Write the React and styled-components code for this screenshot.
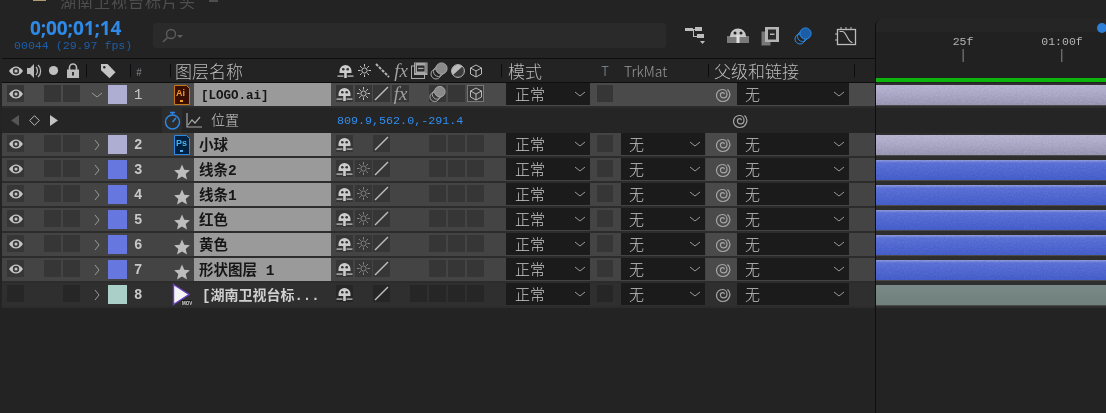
import React from 'react';
import styled, { createGlobalStyle } from 'styled-components';

const GlobalStyle = createGlobalStyle`
  html, body {
    margin: 0;
    height: 100%;
    background: #232323;
    overflow: hidden;
  }
`;

const COLS = '5px 18px 19px 19px 19px 26px 22px 40px 24px 137px 5px 19px 18px 19px 18px 19px 19px 19px 18px 21px 84px 7px 16px 8px 84px 1px 31px 112px 25px';

const CJK = `"Noto Sans CJK SC", "Noto Sans", sans-serif`;
const MONO = `"Liberation Mono", "Noto Sans CJK SC", monospace`;

const Window = styled.div`
  width: 1106px;
  height: 413px;
  display: flex;
  background: #232323;
  overflow: hidden;
`;
const LeftPanel = styled.div`
  width: 875px;
  flex: none;
  display: flex;
  flex-direction: column;
`;
const RightPanel = styled.div`
  flex: 1;
  min-width: 0;
  padding-top: 19px;
  display: flex;
  flex-direction: column;
`;
const Timeline = styled.div`
  flex: 1;
  position: relative;
  display: flex;
  flex-direction: column;
  border-left: 1px solid #0e0e0e;
  border-top-left-radius: 7px;
  overflow: hidden;
`;
const TitleStrip = styled.div`
  height: 9px;
  display: flex;
  align-items: flex-start;
  padding-left: 33px;
  overflow: hidden;
`;
const TitleTag = styled.span`
  width: 13px;
  height: 1px;
  background: #b09a70;
  flex: none;
`;
const TitleText = styled.span`
  font: 16px/16px ${CJK};
  color: #4e4e4e;
  letter-spacing: 1px;
  margin: -7px 0 0 14px;
  white-space: nowrap;
`;
const TitleMenu = styled.span`
  width: 9px;
  height: 2px;
  margin-left: 13px;
  background: #4e4e4e;
  flex: none;
`;
const TopBar = styled.div`
  height: 49px;
  display: flex;
  align-items: flex-start;
  border-bottom: 1px solid #0e0e0e;
  margin-left: 2px;
`;
const TimeBlock = styled.div`
  width: 151px;
  flex: none;
  display: flex;
  flex-direction: column;
  align-items: flex-start;
  padding: 9px 0 0 12px;
  box-sizing: border-box;
`;
const TimeCode = styled.div`
  font: 700 19px/21px "Open Sans", sans-serif;
  color: #2e8ae6;
  margin-left: 16px;
  letter-spacing: -0.1px;
`;
const FrameCount = styled.div`
  font: 11.6px/12px ${MONO};
  color: #1d5ea8;
  margin-top: 1px;
  white-space: nowrap;
`;
const SearchBox = styled.div`
  width: 513px;
  height: 25px;
  margin-top: 14px;
  background: #2a2a2a;
  border-radius: 3px;
  display: flex;
  align-items: center;
  padding-left: 9px;
  box-sizing: border-box;
`;
const Tools = styled.div`
  display: flex;
  align-items: center;
  margin-top: 16px;
  margin-left: 19px;
  height: 22px;
`;
const ToolSlot = styled.span`
  display: flex;
  margin-left: ${p => p.$gap || 0}px;
`;
const RowGrid = styled.div`
  display: grid;
  grid-template-columns: ${COLS};
  grid-template-rows: 23px;
  align-items: center;
  margin-left: 2px;
`;
const HeaderRow = styled(RowGrid)`
  height: 23px;
  border-bottom: 1px solid #0e0e0e;
`;
const LayerRow = styled(RowGrid)`
  height: 23px;
  border-bottom: 2px solid #2c2c2c;
  background: ${p => (p.$active ? '#4a4a4a' : p.$dim ? '#2f2f2f' : '#444444')};
`;
const SubRow = styled.div`
  height: 25px;
  margin-left: 2px;
  background: #252525;
  display: grid;
  grid-template-columns: 8px 10px 8px 13px 8px 10px 102px 22px 22px 132px 395px 20px;
  grid-template-rows: 25px;
  align-items: center;
`;
const Cell = styled.div`
  grid-column: ${p => p.$col};
  grid-row: 1;
  height: 100%;
  min-width: 0;
  display: flex;
  align-items: center;
  justify-content: ${p => p.$justify || 'center'};
  padding-left: ${p => p.$pl || 0}px;
  padding-right: ${p => p.$pr || 0}px;
  box-sizing: border-box;
`;
const BoxCell = styled(Cell)`
  justify-content: flex-start;
`;
const HeadDivider = styled.span`
  width: 1px;
  height: 13px;
  background: #0c0c0c;
  flex: none;
  margin-left: ${p => p.$ml || 0}px;
  margin-right: ${p => p.$mr || 0}px;
`;
const HeadText = styled.span`
  font: 300 ${p => p.$size || 17}px/20px ${CJK};
  color: ${p => p.$color || '#bdbdbd'};
  margin-left: ${p => p.$ml || 0}px;
  white-space: nowrap;
`;
const TagSlot = styled.span`
  display: flex;
  margin-left: 13px;
`;
const Box = styled.span`
  width: ${p => p.$w || 17}px;
  height: 17px;
  margin-bottom: 2px;
  flex: none;
  background: ${p => (p.$dim ? '#262626' : '#363636')};
  box-shadow: ${p => (p.$on ? 'inset 0 0 0 1px #777' : 'none')};
  display: flex;
  align-items: center;
  justify-content: center;
`;
const FxText = styled.span`
  font: italic 19px/17px "Liberation Serif", serif;
  color: #a0a0a0;
`;
const Chevron = styled.svg`
  width: 10px;
  height: 10px;
  fill: none;
  stroke: #9a9a9a;
  stroke-width: 1;
`;
const Label = styled.span`
  width: 19px;
  height: 19px;
  background: ${p => p.$color};
  flex: none;
`;
const Num = styled.span`
  font: ${p => (p.$light ? 400 : 700)} 14px/16px "Liberation Mono", monospace;
  color: #c8c8c8;
  padding-left: 4px;
`;
const StarWrap = styled.span`
  display: flex;
  margin-top: 4px;
`;
const NameBox = styled.div`
  width: 100%;
  height: 100%;
  padding-left: ${p => p.$pad}px;
  background: ${p => (p.$plain ? 'transparent' : '#9a9a9a')};
  color: ${p => (p.$plain ? '#d0d0d0' : '#161616')};
  font: 700 ${p => p.$size}px/27px ${MONO};
  white-space: pre;
  overflow: hidden;
  box-sizing: border-box;
`;
const Select = styled.div`
  width: 100%;
  height: 22px;
  margin-bottom: 1px;
  background: #1b1b1b;
  color: #c9c9c9;
  display: flex;
  align-items: center;
  justify-content: space-between;
  padding: 0 5px 0 ${p => p.$pad || 8}px;
  box-sizing: border-box;
  font: 300 15px/22px ${CJK};
`;
const PickCell = styled(Cell)`
  background: ${p => (p.$plain ? 'transparent' : '#4a4a4a')};
  padding-left: 3px;
`;
const StopBox = styled.span`
  width: 20px;
  height: 25px;
  background: #2c2c2c;
  display: flex;
  align-items: center;
  justify-content: center;
`;
const PropName = styled.span`
  font: 300 14px/20px ${CJK};
  color: #c4c4c4;
  padding-left: 6px;
  margin-bottom: 3px;
`;
const PropValue = styled.span`
  font: 11.7px/14px ${MONO};
  color: #308ef0;
  white-space: nowrap;
`;
const Ruler = styled.div`
  height: 40px;
  flex: none;
  background: #212121;
  position: relative;
  box-shadow: inset 0 13px 0 #252525;
`;
const Tick = styled.div`
  position: absolute;
  left: ${p => p.$x}px;
  top: 16px;
  font: 11.5px/14px ${MONO};
  color: #b4b4b4;
  transform: translateX(-50%);
  display: flex;
  flex-direction: column;
  align-items: center;
  white-space: nowrap;
`;
const TickLine = styled.span`
  width: 1px;
  height: 13px;
  background: #8a8a8a;
`;
const PlayDot = styled.span`
  position: absolute;
  right: -1px;
  top: 4px;
  width: 10px;
  height: 10px;
  border-radius: 50%;
  background: #2e7fd6;
`;
const WorkArea = styled.div`
  height: 24px;
  flex: none;
  background: #212121;
  box-sizing: border-box;
  padding-top: 19px;
`;
const GreenBar = styled.div`
  height: 4px;
  background: #0bb50b;
`;
const TrackRow = styled.div`
  height: 25px;
  flex: none;
  box-sizing: border-box;
  background: ${p => (p.$empty ? '#252525' : '#2e2e2e')};
  padding: ${p => (p.$empty ? 0 : '2px 0 3px')};
`;
const Bar = styled.div`
  height: 100%;
  position: relative;
  overflow: hidden;
  background: ${p => p.$bg};
  box-shadow: 0 1px 0 #4a4a4a;
`;
const Grain = styled.svg`
  position: absolute;
  inset: 0;
  width: 100%;
  height: 100%;
  opacity: 0.35;
  mix-blend-mode: overlay;
`;

const Eye = () => (
  <svg width="16" height="16" viewBox="0 0 16 16">
    <path d="M1 8c2-3 4.500-4.500 7-4.500S13 5 15 8c-2 3-4.500 4.500-7 4.500S3 11 1 8z" fill="#c4c4c4" />
    <circle cx="8" cy="8" r="3.200" fill="#3a3a3a" />
    <circle cx="8" cy="8" r="1.500" fill="#c4c4c4" />
  </svg>
);
const Speaker = () => (
  <svg width="17" height="16" viewBox="0 0 17 16" fill="none">
    <path d="M1 5h3l4-4v14l-4-4H1z" fill="#b8b8b8" />
    <path d="M10 4c2 2 2 6 0 8M12 2c3.500 3 3.500 9 0 12" stroke="#b8b8b8" strokeWidth="1.300" />
  </svg>
);
const Dot = () => (
  <svg width="11" height="11" viewBox="0 0 11 11"><circle cx="5.500" cy="5.500" r="4.600" fill="#c0c0c0" /></svg>
);
const Lock = () => (
  <svg width="14" height="15" viewBox="0 0 14 15" fill="none">
    <path d="M3.500 7V4.500a3.500 3.500 0 0 1 7 0V7" stroke="#bcbcbc" strokeWidth="1.600" />
    <path d="M1 6.500h12V15H1z" fill="#bcbcbc" />
    <rect x="6" y="9" width="2" height="3.500" fill="#333" />
  </svg>
);
const Tag = () => (
  <svg width="16" height="16" viewBox="0 0 16 16">
    <path d="M1 1h6.500l8 8.200-6 6L1 7.200z" fill="#c4c4c4" />
    <circle cx="4.300" cy="4.300" r="1.200" fill="#2a2a2a" />
  </svg>
);
const Shy = () => (
  <svg width="17" height="16" viewBox="0 0 17 16">
    <path d="M2.500 8a6 6 0 0 1 12 0v2h-12z" fill="#cccccc" />
    <circle cx="6.300" cy="6.300" r="1.300" fill="#333" />
    <circle cx="10.700" cy="6.300" r="1.300" fill="#333" />
    <rect x="7.200" y="9" width="2.600" height="6" fill="#cccccc" />
    <rect x="0.500" y="12.500" width="6" height="1.200" fill="#cccccc" />
    <rect x="10.500" y="12.500" width="6" height="1.200" fill="#cccccc" />
  </svg>
);
const Sun = ({ color = '#c4c4c4' }) => (
  <svg width="13" height="13" viewBox="0 0 13 13" stroke={color} fill="none" strokeWidth="1">
    <circle cx="6.500" cy="6.500" r="2.600" />
    <path d="M6.500 0v2.500M6.500 10.500V13M0 6.500h2.500M10.500 6.500H13M2 2l1.800 1.800M9.200 9.200 11 11M2 11l1.800-1.800M9.200 3.800 11 2" />
  </svg>
);
const Dashed = () => (
  <svg width="15" height="15" viewBox="0 0 15 15">
    <path d="M1 1l13 13" stroke="#b8b8b8" strokeWidth="2" strokeDasharray="3 1.200" fill="none" />
  </svg>
);
const Slash = () => (
  <svg width="15" height="15" viewBox="0 0 15 15">
    <path d="M1 14 14 1" stroke="#bdbdbd" strokeWidth="1.500" fill="none" />
  </svg>
);
const FilmFrame = () => (
  <svg width="17" height="17" viewBox="0 0 17 17">
    <rect x="3" y="0.500" width="13.500" height="12.500" fill="#a8a8a8" />
    <rect x="0.500" y="4" width="13" height="12.500" fill="none" stroke="#a8a8a8" strokeWidth="1" />
    <rect x="6" y="3.500" width="7.500" height="6" fill="#2a2a2a" />
    <rect x="7" y="5.800" width="5.500" height="1.300" fill="#a8a8a8" />
    <path d="M4 2h1M4 4h1M4 6h1M4 8h1M4 10h1M14.500 2h1M14.500 4h1M14.500 6h1M14.500 8h1M14.500 10h1" stroke="#2a2a2a" strokeWidth="1" />
  </svg>
);
const Blur = ({ fill = '#8a8a8a', ring = '#a8a8a8' }) => (
  <svg width="18" height="18" viewBox="0 0 18 18" fill="none">
    <circle cx="6" cy="12" r="5" stroke={ring} strokeWidth="1" />
    <circle cx="8.500" cy="9.500" r="5" stroke={ring} strokeWidth="1" />
    <circle cx="11.500" cy="6.500" r="5.600" fill={fill} stroke={ring} strokeWidth="1" />
  </svg>
);
const HalfMoon = () => (
  <svg width="14" height="14" viewBox="0 0 14 14">
    <circle cx="7" cy="7" r="6.400" fill="#3b3b3b" stroke="#bcbcbc" />
    <path d="M12 3 2.600 11.600A6.400 6.400 0 0 0 12 3z" fill="#bcbcbc" transform="rotate(180 7 7)" />
  </svg>
);
const Cube = () => (
  <svg width="14" height="14" viewBox="0 0 14 14" fill="none" stroke="#bcbcbc" strokeWidth="1">
    <path d="M7 1l5.500 3v6L7 13l-5.500-3V4zM1.500 4 7 7l5.500-3M7 7v6" />
  </svg>
);
const Spiral = () => (
  <svg width="16" height="16" viewBox="0 0 16 16" fill="none" stroke="#a6a6a6" strokeWidth="1.200">
    <path d="M12.500 2.500c2 1.800 3 4.300 2 7-1 3-3.600 5-6.600 5C4.500 14.500 1.500 12 1.500 8.500c0-3.500 2.800-6 5.800-6 2.800 0 4.700 2 4.700 4.500 0 2.200-1.600 3.900-3.600 3.900-1.700 0-3-1.200-3-2.800 0-1.400 1-2.400 2.300-2.400 1 0 1.700.7 1.700 1.500" />
  </svg>
);
const Star = () => (
  <svg width="16" height="16" viewBox="0 0 16 16">
    <path d="M8 0.500l2.300 5.200 5.600.5-4.200 3.700 1.300 5.500L8 12.500l-5 2.900 1.300-5.500L.1 6.200l5.600-.5z" fill="#bdbdbd" />
  </svg>
);
const FileIcon = ({ text, border, bg, color }) => (
  <svg width="16" height="20" viewBox="0 0 16 20">
    <path d="M.5.500h12l3 3v16H.5z" fill={bg} stroke={border} strokeWidth="1" />
    <text x="2" y="11" fontFamily="Liberation Sans, sans-serif" fontWeight="700" fontSize="9" fill={color}>{text}</text>
    <rect x="6" y="15" width="3" height="2" fill={color} />
  </svg>
);
const MovIcon = () => (
  <svg width="20" height="24" viewBox="0 0 20 24">
    <path d="M1.500 1.500 17 11.500 1.500 21.500z" fill="#f4f4f4" stroke="#6a3fc0" strokeWidth="1.400" />
    <rect x="9.500" y="17" width="10.500" height="5" fill="#1a1a1a" />
    <text x="10" y="21.500" fontFamily="Liberation Sans, sans-serif" fontWeight="700" fontSize="4.500" fill="#ddd">MOV</text>
  </svg>
);
const Search = () => (
  <svg width="22" height="16" viewBox="0 0 22 16" fill="none" stroke="#5e5e5e">
    <circle cx="9" cy="6" r="4.500" strokeWidth="1.300" />
    <path d="M5.500 9.500 1 14" strokeWidth="1.500" />
    <path d="M15 7h6l-3 3z" fill="#5e5e5e" stroke="none" />
  </svg>
);
const Flow = () => (
  <svg width="22" height="20" viewBox="0 0 22 20" fill="#bdbdbd">
    <rect x="0" y="2" width="8" height="3" />
    <rect x="10" y="1" width="7" height="4" />
    <rect x="12" y="8" width="7" height="4" />
    <path d="M6 3h5v1H6zM8 4h1v6h4v1H8z" />
    <path d="M15 15h5l-2.500 3z" />
  </svg>
);
const ShyTool = () => (
  <svg width="22" height="18" viewBox="0 0 22 18">
    <rect x="0" y="9" width="22" height="7" fill="#7a7a7a" />
    <path d="M3 9a8 7.500 0 0 1 16 0v1H3z" fill="#c8c8c8" />
    <circle cx="8" cy="6" r="1.500" fill="#232323" />
    <circle cx="14" cy="6" r="1.500" fill="#232323" />
    <rect x="9.500" y="8" width="3" height="8" fill="#e0e0e0" />
  </svg>
);
const FilmTool = () => (
  <svg width="18" height="19" viewBox="0 0 18 19">
    <rect x="0.500" y="4.500" width="9" height="14" fill="#777" />
    <rect x="4" y="0" width="14" height="15" fill="#b4b4b4" />
    <rect x="7" y="2.500" width="8" height="10" fill="#2a2a2a" />
    <rect x="9" y="6.500" width="4.500" height="1.500" fill="#b4b4b4" />
  </svg>
);
const GraphTool = () => (
  <svg width="22" height="20" viewBox="0 0 22 20" fill="none" stroke="#bcbcbc">
    <rect x="2.500" y="3.500" width="18" height="15" strokeWidth="1.300" />
    <path d="M4.500 5.500h3c4 0 5 11 10 11" strokeWidth="1.200" />
    <path d="M6 1v2M11 1v2M16 1v2M0 8h2M0 14h2" strokeWidth="1" />
  </svg>
);
const StopWatch = () => (
  <svg width="17" height="19" viewBox="0 0 17 19" fill="none" stroke="#2e86e0" strokeWidth="1.500">
    <circle cx="8.500" cy="11" r="7" />
    <path d="M6 1.500h5M8.500 2v2M8.500 11l3.500-4" />
  </svg>
);
const GraphIcon = () => (
  <svg width="16" height="15" viewBox="0 0 16 15" fill="none" stroke="#a8a8a8" strokeWidth="1.200">
    <path d="M1 0v14h15" />
    <path d="M2 12l4-5 3 3 5-6" />
  </svg>
);
const PrevKey = () => (
  <svg width="8" height="11" viewBox="0 0 8 11"><path d="M8 0v11L0 5.500z" fill="#555" /></svg>
);
const NextKey = () => (
  <svg width="8" height="11" viewBox="0 0 8 11"><path d="M0 0v11l8-5.500z" fill="#c4c4c4" /></svg>
);
const KeyDiamond = () => (
  <svg width="11" height="11" viewBox="0 0 11 11"><path d="M5.500.7l4.800 4.800-4.800 4.800L.7 5.500z" fill="none" stroke="#b8b8b8" /></svg>
);
const ChevDown = () => <Chevron viewBox="0 0 10 10"><path d="M0 3l5 4 5-4" /></Chevron>;
const ChevRight = () => <Chevron viewBox="0 0 10 10"><path d="M3 0l4 5-4 5" /></Chevron>;

const layers = [
  { n: 1, name: '[LOGO.ai]', size: 12.5, pad: 7, label: '#aeaed2', icon: 'ai', open: true, active: true },
  { n: 2, name: '小球', size: 14.5, pad: 5, label: '#aeaed2', icon: 'ps' },
  { n: 3, name: '线条2', size: 14.5, pad: 5, label: '#6678e0', icon: 'star', sun: true },
  { n: 4, name: '线条1', size: 14.5, pad: 5, label: '#6678e0', icon: 'star', sun: true },
  { n: 5, name: '红色', size: 14.5, pad: 5, label: '#6678e0', icon: 'star', sun: true },
  { n: 6, name: '黄色', size: 14.5, pad: 5, label: '#6678e0', icon: 'star', sun: true },
  { n: 7, name: '形状图层 1', size: 14.5, pad: 5, label: '#6678e0', icon: 'star', sun: true },
  { n: 8, name: '[湖南卫视台标...', size: 14, pad: 8, label: '#a9cfc8', icon: 'mov', dim: true },
];

const LayerIcon = ({ type }) => {
  if (type === 'ai') return <FileIcon text="Ai" border="#c8761a" bg="#3a0f00" color="#f09a30" />;
  if (type === 'ps') return <FileIcon text="Ps" border="#2a8ae0" bg="#00213f" color="#4fb0f0" />;
  if (type === 'mov') return <MovIcon />;
  return <StarWrap><Star /></StarWrap>;
};

const Layer = ({ layer }) => {
  const { dim, active, sun, open } = layer;
  return (
    <LayerRow $active={active} $dim={dim}>
      <BoxCell $col={2}><Box $dim={dim}>{!dim && <Eye />}</Box></BoxCell>
      <BoxCell $col={4}>{!dim && <Box />}</BoxCell>
      <BoxCell $col={5}><Box $dim={dim} /></BoxCell>
      <Cell $col={6} $justify="flex-end" $pr={6}>
        {open ? <ChevDown /> : <ChevRight />}
      </Cell>
      <Cell $col={7} $justify="flex-start"><Label $color={layer.label} /></Cell>
      <Cell $col={8} $justify="flex-start"><Num $light={open}>{layer.n}</Num></Cell>
      <Cell $col={9}><LayerIcon type={layer.icon} /></Cell>
      <Cell $col={10}>
        <NameBox $plain={dim} $pad={layer.pad} $size={layer.size}>{layer.name}</NameBox>
      </Cell>
      <BoxCell $col={12}><Box $dim={dim}><Shy /></Box></BoxCell>
      <BoxCell $col={13}>{(sun || active) && <Box><Sun color={sun ? '#858585' : '#c4c4c4'} /></Box>}</BoxCell>
      <BoxCell $col={14}><Box $dim={dim}><Slash /></Box></BoxCell>
      <BoxCell $col={15}>{active && <Box><FxText>fx</FxText></Box>}</BoxCell>
      <BoxCell $col={16}>{dim && <Box $dim />}</BoxCell>
      <BoxCell $col={17}>{active ? <Box><Blur /></Box> : <Box $dim={dim} />}</BoxCell>
      <BoxCell $col={18}><Box $dim={dim} /></BoxCell>
      <BoxCell $col={19}>{active ? <Box $on><Cube /></Box> : <Box $dim={dim} />}</BoxCell>
      <Cell $col={21}>
        <Select $pad={9}><span>正常</span><ChevDown /></Select>
      </Cell>
      <Cell $col={23}><Box $dim={dim} $w={16} /></Cell>
      <Cell $col={25}>
        {!active && <Select><span>无</span><ChevDown /></Select>}
      </Cell>
      <PickCell $col={27} $plain={dim}><Spiral /></PickCell>
      <Cell $col={28}>
        <Select><span>无</span><ChevDown /></Select>
      </Cell>
    </LayerRow>
  );
};

const Track = ({ bg }) => (
  <TrackRow>
    <Bar $bg={bg}>
      <Grain>
        <filter id="grain"><feTurbulence type="fractalNoise" baseFrequency="0.6" numOctaves="2" /><feColorMatrix type="saturate" values="0" /></filter>
        <rect width="100%" height="100%" filter="url(#grain)" />
      </Grain>
    </Bar>
  </TrackRow>
);

const PURPLE = 'linear-gradient(#b0adcc 0, #a29fc0 50%, #8f8cab 100%)';
const BLUE = 'linear-gradient(#8490d4 0, #5468d2 15%, #3f56c4 100%)';
const GREY = 'linear-gradient(#7a8a86, #6f807c)';

export default function App() {
  return (
    <Window>
      <GlobalStyle />
      <LeftPanel>
        <TitleStrip>
          <TitleTag />
          <TitleText>湖南卫视台标片头</TitleText>
          <TitleMenu />
        </TitleStrip>
        <TopBar>
          <TimeBlock>
            <TimeCode>0;00;01;14</TimeCode>
            <FrameCount>00044 (29.97 fps)</FrameCount>
          </TimeBlock>
          <SearchBox><Search /></SearchBox>
          <Tools>
            <Flow />
            <ToolSlot $gap={20}><ShyTool /></ToolSlot>
            <ToolSlot $gap={12}><FilmTool /></ToolSlot>
            <ToolSlot $gap={15}><Blur fill="#1c5da8" ring="#2e8ae6" /></ToolSlot>
            <ToolSlot $gap={23}><GraphTool /></ToolSlot>
          </Tools>
        </TopBar>
        <HeaderRow>
          <Cell $col={2}><Eye /></Cell>
          <Cell $col={3}><Speaker /></Cell>
          <Cell $col={4}><Dot /></Cell>
          <Cell $col={5}><Lock /></Cell>
          <Cell $col={6} $justify="flex-start">
            <HeadDivider $ml={4} />
            <TagSlot><Tag /></TagSlot>
          </Cell>
          <Cell $col={8} $justify="flex-start">
            <HeadDivider $mr={-2} />
            <HeadText $size={11} $ml={7} $color="#8b8f99">#</HeadText>
          </Cell>
          <Cell $col={9} $justify="flex-start"><HeadDivider /></Cell>
          <Cell $col={10} $justify="flex-start">
            <HeadText $ml={-19}>图层名称</HeadText>
          </Cell>
          <Cell $col={12}><Shy /></Cell>
          <Cell $col={13}><Sun /></Cell>
          <Cell $col={14}><Dashed /></Cell>
          <Cell $col={15}><FxText>fx</FxText></Cell>
          <Cell $col={16}><FilmFrame /></Cell>
          <Cell $col={17}><Blur /></Cell>
          <Cell $col={18}><HalfMoon /></Cell>
          <Cell $col={19}><Cube /></Cell>
          <Cell $col={20} $justify="flex-end" $pr={4}><HeadDivider /></Cell>
          <Cell $col={21} $justify="flex-start">
            <HeadText $ml={2}>模式</HeadText>
          </Cell>
          <Cell $col={23}><HeadText $size={13} $color="#8a97a8">T</HeadText></Cell>
          <Cell $col={25} $justify="flex-start">
            <HeadText $size={14} $ml={3} $color="#9a9a9a">TrkMat</HeadText>
          </Cell>
          <Cell $col={27} $justify="flex-start">
            <HeadDivider $ml={2} />
            <HeadText $ml={5}>父级和链接</HeadText>
          </Cell>
          <Cell $col={29} $justify="flex-start"><HeadDivider $ml={5} /></Cell>
        </HeaderRow>
        <Layer layer={layers[0]} />
        <SubRow>
          <Cell $col={2}><PrevKey /></Cell>
          <Cell $col={4}><KeyDiamond /></Cell>
          <Cell $col={6}><NextKey /></Cell>
          <Cell $col={8}><StopBox><StopWatch /></StopBox></Cell>
          <Cell $col={9}><GraphIcon /></Cell>
          <Cell $col={10} $justify="flex-start"><PropName>位置</PropName></Cell>
          <Cell $col={11} $justify="flex-start"><PropValue>809.9,562.0,-291.4</PropValue></Cell>
          <Cell $col={12} $justify="flex-start"><Spiral /></Cell>
        </SubRow>
        {layers.slice(1).map(l => <Layer key={l.n} layer={l} />)}
      </LeftPanel>
      <RightPanel>
        <Timeline>
          <Ruler>
            <PlayDot />
            <Tick $x={87}>25f<TickLine /></Tick>
            <Tick $x={186}>01:00f<TickLine /></Tick>
          </Ruler>
          <WorkArea><GreenBar /></WorkArea>
          <Track bg={PURPLE} />
          <TrackRow $empty />
          <Track bg={PURPLE} />
          <Track bg={BLUE} />
          <Track bg={BLUE} />
          <Track bg={BLUE} />
          <Track bg={BLUE} />
          <Track bg={BLUE} />
          <TrackRow><Bar $bg={GREY} /></TrackRow>
        </Timeline>
      </RightPanel>
    </Window>
  );
}
